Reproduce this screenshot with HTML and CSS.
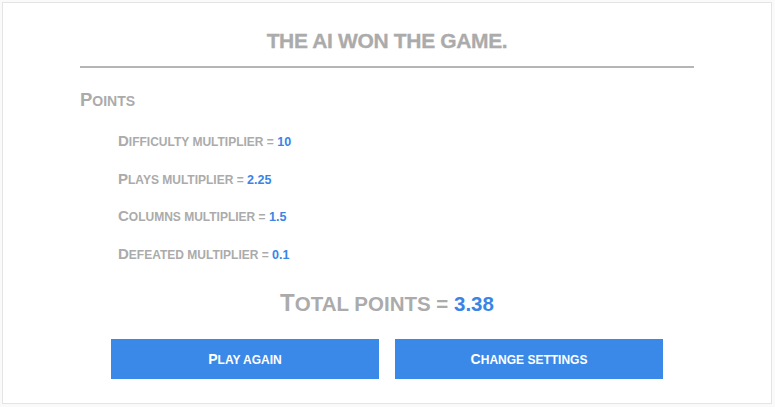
FILE: index.html
```html
<!DOCTYPE html>
<html>
<head>
<meta charset="utf-8">
<link rel="stylesheet" href="styles.css">
</head>
<body>
<div class="card">
  <div class="inner">
    <h1 class="title">THE AI WON THE GAME.</h1>
    <h2 class="heading">Points</h2>
    <ul class="rows">
      <li class="row">Difficulty multiplier = <span class="val">10</span></li>
      <li class="row">Plays multiplier = <span class="val">2.25</span></li>
      <li class="row">Columns multiplier = <span class="val">1.5</span></li>
      <li class="row">Defeated multiplier = <span class="val">0.1</span></li>
    </ul>
    <div class="total">Total points = <span class="val">3.38</span></div>
  </div>
  <div class="actions">
    <button class="btn"><span class="btn-label">Play again</span></button>
    <button class="btn"><span class="btn-label">Change settings</span></button>
  </div>
</div>
</body>
</html>
```
FILE: styles.css
```css
html, body {
  margin: 0;
  padding: 0;
  background: #fafafa;
}
body {
  padding: 2px;
  font-family: "Liberation Sans", Arial, sans-serif;
  font-weight: bold;
  color: #ababab;
}
.card {
  box-sizing: border-box;
  width: 770px;
  height: 402px;
  background: #fff;
  border: 1px solid #e4e4e4;
  padding-top: 26px;
}
.inner {
  width: 614px;
  margin: 0 auto;
}
.title {
  margin: 0;
  font-size: 21px;
  letter-spacing: -0.35px;
  line-height: 24px;
  text-align: center;
  padding-bottom: 13px;
  border-bottom: 2px solid #b5b5b5;
  -webkit-text-stroke: 0.3px #ababab;
}
.heading {
  margin: 21px 0 0;
  font-size: 14px;
  line-height: 22px;
  text-transform: uppercase;
}
.heading::first-letter {
  font-size: 18.5px;
}
.rows {
  list-style: none;
  margin: 19px 0 0;
  padding: 0 0 0 38px;
}
.row {
  font-size: 12px;
  line-height: 20px;
  height: 37.6px;
  text-transform: uppercase;
}
.row::first-letter {
  font-size: 15px;
}
.val {
  color: #3a84e6;
  font-size: 12.5px;
}
.total {
  margin-top: 8px;
  text-align: center;
  font-size: 20.5px;
  line-height: 28px;
  text-transform: uppercase;
}
.total::first-letter {
  font-size: 24px;
}
.total .val {
  font-size: 20.5px;
}
.actions {
  display: flex;
  justify-content: center;
  gap: 16px;
  margin-top: 21px;
}
.btn {
  width: 268px;
  height: 40px;
  border: 0;
  background: #3a89e8;
  color: #fff;
  font-family: "Liberation Sans", Arial, sans-serif;
  font-weight: bold;
  font-size: 12px;
  text-transform: uppercase;
  padding: 0;
}
.btn-label {
  display: inline-block;
}
.btn-label::first-letter {
  font-size: 14px;
}
```
